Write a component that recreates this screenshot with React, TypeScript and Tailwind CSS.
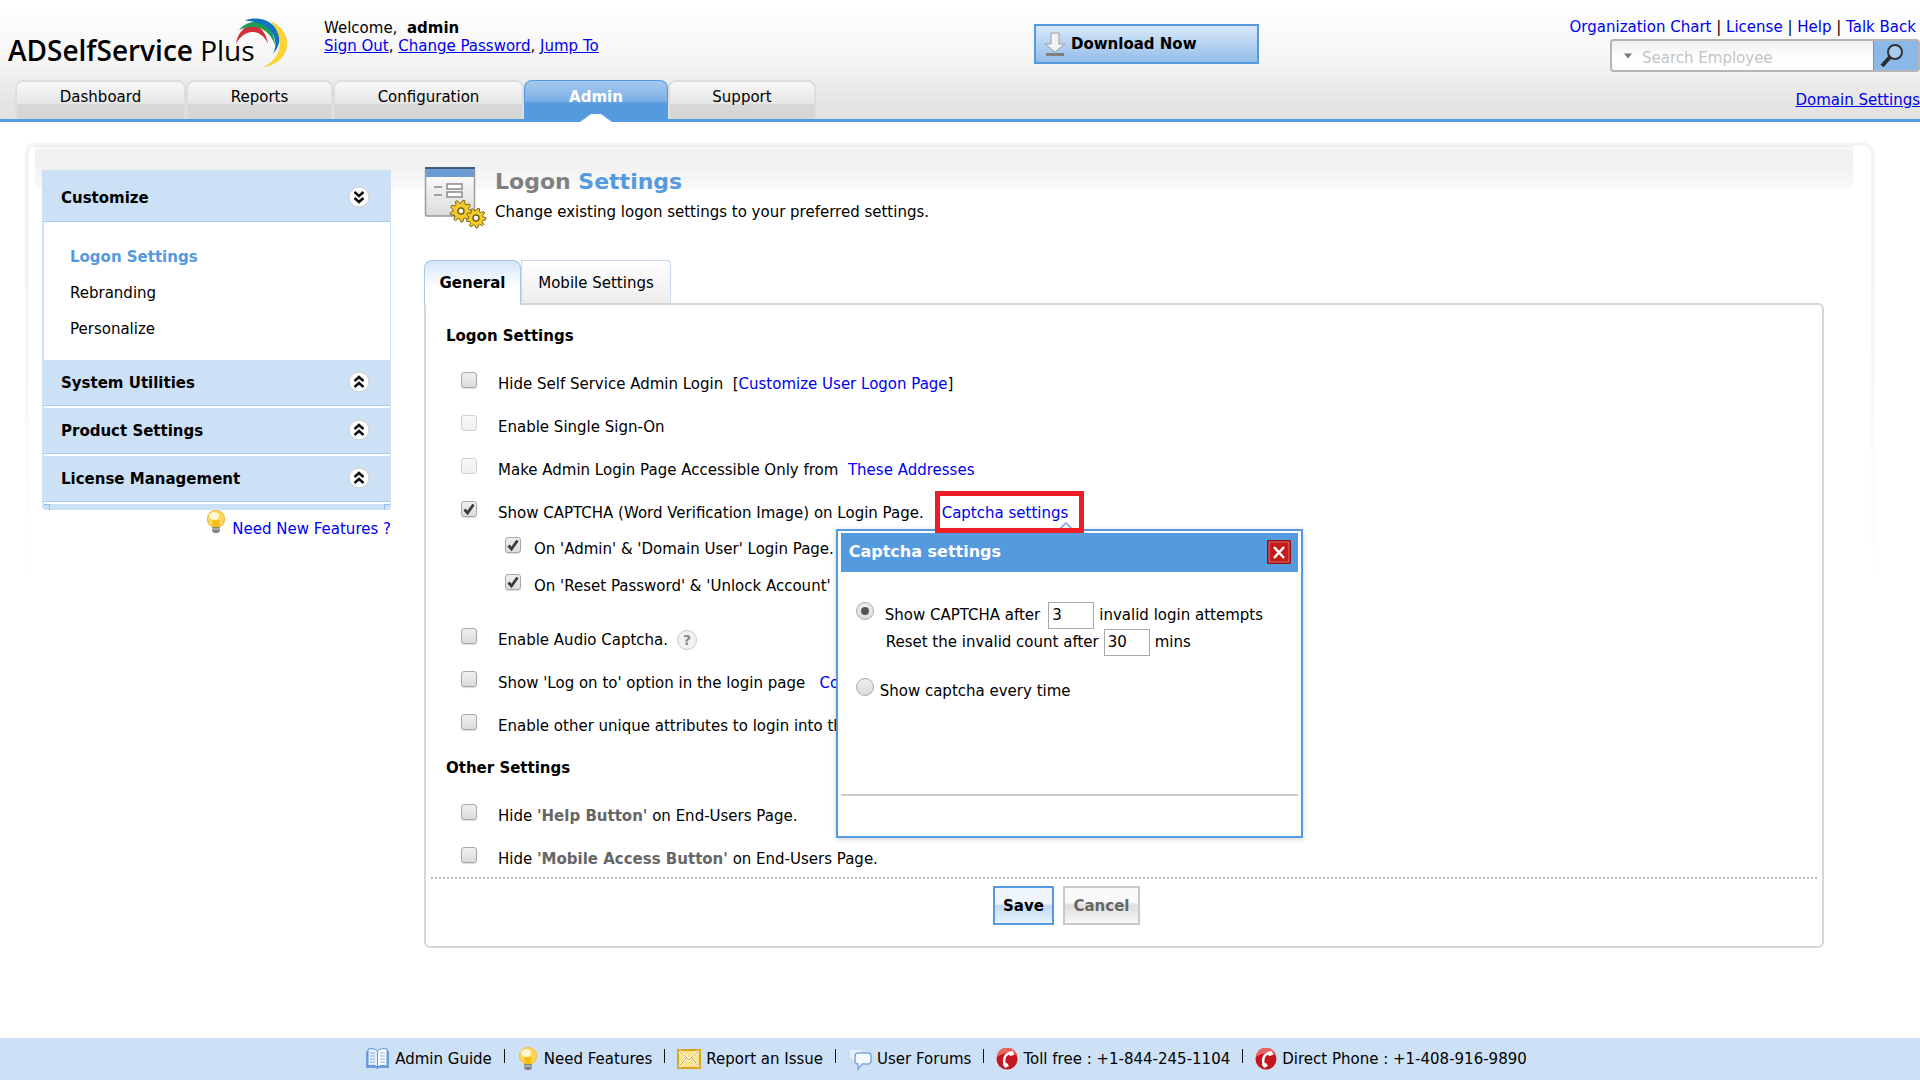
import { useState, type ReactNode } from "react";

const navTabs = [
  { label: "Dashboard", width: "w-[171px]" },
  { label: "Reports", width: "w-[147px]" },
  { label: "Configuration", width: "w-[191px]" },
  { label: "Admin", width: "w-[144px]" },
  { label: "Support", width: "w-[148px]" },
];

const menuSections = ["System Utilities", "Product Settings", "License Management"];

function Logo() {
  return (
    <div className="flex w-[324px] shrink-0 pt-[18px] pl-2">
      <a href="#" className="grid h-[50px] w-[280px]">
        <span className="col-start-1 row-start-1 self-end font-['Open_Sans',sans-serif] text-[28px] leading-[35px] whitespace-nowrap text-black">
          <b className="font-semibold">ADSelfService</b> Plus
        </span>
        <svg viewBox="0 0 54 50" className="col-start-1 row-start-1 h-[50px] w-[54px] justify-self-end">
          <path d="M2 26C5 4 30 -1 34 26C27 10 10 10 2 26Z" fill="#d3303a" />
          <path d="M5 12C18 -3 40 3 41 27C35 10 20 5 5 12Z" fill="#1f9d55" />
          <path d="M11 2.500C32 -6 58 14 39 36C47 18 34 4 11 2.500Z" fill="#0f75bc" />
          <path d="M36 3C60 12 60 44 29 49.500C50 39 50 18 36 3Z" fill="#fdd13a" />
        </svg>
      </a>
    </div>
  );
}

function BulbIcon() {
  return (
    <svg viewBox="0 0 22 24" className="h-6 w-[22px] shrink-0">
      <circle cx="11" cy="9" r="9.5" fill="#fbe7a8" />
      <circle cx="11" cy="9" r="8.5" fill="#ffd75e" stroke="#e9b64a" />
      <ellipse cx="9" cy="6" rx="5" ry="4" fill="#fff6d2" />
      <path d="M7 10h8l-1 7H8z" fill="#f6bd17" />
      <path d="M7 17h8v4l-2 2H9l-2-2z" fill="#858585" />
      <path d="M7 19h8" stroke="#cfcfcf" />
    </svg>
  );
}

function BookIcon() {
  return (
    <svg viewBox="0 0 25 22" className="h-[22px] w-[25px] shrink-0">
      <path d="M1 3v17h10l1.500 1.500L14 20h10V3z" fill="#6f9fda" />
      <path d="M3 1c4-1 8 0 9.500 2v16C10 17 6 17 3 18z" fill="#e4f1fd" stroke="#5d93d4" />
      <path d="M22 1c-4-1-8 0-9.500 2v16c2.500-2 6.500-2 9.500-1z" fill="#fff" stroke="#5d93d4" />
      <path d="M5 5h5M5 8h5M5 11h5M5 14h5M15 5h5M15 8h5M15 11h5M15 14h5" stroke="#7fb0e6" />
    </svg>
  );
}

function MailIcon() {
  return (
    <svg viewBox="0 0 24 22" className="h-[22px] w-6 shrink-0">
      <rect x="1" y="2" width="22" height="18" fill="#fbe28b" stroke="#d9a520" strokeWidth="2" />
      <path d="M2 3l10 9L22 3M2 19l7-9M22 19l-7-9" fill="none" stroke="#fff" strokeWidth="2.500" />
      <path d="M2 3l10 9L22 3M2 19l7-9M22 19l-7-9" fill="none" stroke="#d39a1c" />
    </svg>
  );
}

function ForumIcon() {
  return (
    <svg viewBox="0 0 24 24" className="h-6 w-6 shrink-0">
      <path d="M1 2h14v10H8l-4 4v-4H1z" fill="#e8f1fb" stroke="#c3d8ef" />
      <path d="M10 6h10q3 0 3 3v5q0 3-3 3h-6l-4 5v-5q-3 0-3-3V9q0-3 3-3z" fill="#f5faff" stroke="#7fa9dc" strokeWidth="1.500" />
    </svg>
  );
}

function PhoneIcon() {
  return (
    <svg viewBox="0 0 22 22" className="h-[22px] w-[22px] shrink-0">
      <circle cx="11" cy="11" r="10.500" fill="#c5161d" />
      <path d="M1 9a10 9 0 0 1 20-1C15 3 8 5 1 9z" fill="#e8625f" />
      <path d="M15 5C8 6 7 12 9 18" fill="none" stroke="#fff" strokeWidth="2.500" />
      <path d="M12 4l5-1 1 4-4 1zM7 16l4-1 2 3-4 2z" fill="#fff" />
    </svg>
  );
}

function DownloadIcon() {
  return (
    <svg viewBox="0 0 22 25" className="h-[25px] w-[22px]">
      <path d="M7 1h8v11h6L11 20 1 12h6z" fill="#f3f3f3" stroke="#9c9c9c" />
      <path d="M2 21h18v3H2z" fill="#808080" />
    </svg>
  );
}

function gearPath(cx: number, cy: number, r: number) {
  const points: string[] = [];
  for (let i = 0; i < 36; i++) {
    const radius = i % 4 < 2 ? r : r * 0.72;
    const angle = (i / 36) * Math.PI * 2;
    points.push(`${(cx + radius * Math.cos(angle)).toFixed(1)},${(cy + radius * Math.sin(angle)).toFixed(1)}`);
  }
  return points.join(" ");
}

function SettingsPageIcon() {
  return (
    <svg viewBox="0 0 63 63" className="h-[63px] w-[63px] shrink-0">
      <defs>
        <linearGradient id="sheet" x1="0" y1="0" x2="0" y2="1">
          <stop offset="0" stopColor="#ffffff" />
          <stop offset="1" stopColor="#dcdcdc" />
        </linearGradient>
      </defs>
      <rect x="1.500" y="2" width="49" height="48" rx="1.500" fill="url(#sheet)" stroke="#9b9b9b" strokeWidth="1.500" />
      <rect x="2" y="2" width="48" height="9" fill="#6d9bd3" />
      <path d="M1 2h50" stroke="#43597a" strokeWidth="2" />
      <path d="M10 21h8M10 29h8" stroke="#8b8b8b" strokeWidth="1.500" />
      <rect x="23" y="18" width="15" height="5" fill="#fff" stroke="#8b8b8b" strokeWidth="1.500" />
      <rect x="23" y="26" width="15" height="5" fill="#fff" stroke="#8b8b8b" strokeWidth="1.500" />
      <polygon points={gearPath(37, 45, 11)} fill="#f1cc2c" stroke="#7a6212" />
      <circle cx="37" cy="45" r="3" fill="#fff" stroke="#7a6212" strokeWidth="1.500" />
      <polygon points={gearPath(52, 52, 10)} fill="#f1cc2c" stroke="#7a6212" />
      <circle cx="52" cy="52" r="3" fill="#fff" stroke="#7a6212" strokeWidth="1.500" />
    </svg>
  );
}

function ChevronBadge({ down = false }: { down?: boolean }) {
  return (
    <svg viewBox="0 0 22 22" className="mb-[2px] h-[22px] w-[22px]">
      <circle cx="11" cy="11" r="10" fill="#fff" stroke="#cfcfcf" />
      <path
        d={down ? "M6.500 6l4.500 4 4.500-4M6.500 12l4.500 4 4.500-4" : "M6.500 10l4.500-4 4.500 4M6.500 16l4.500-4 4.500 4"}
        fill="none"
        stroke="#111"
        strokeWidth="2.500"
      />
    </svg>
  );
}

type CheckProps = { id: string; defaultChecked?: boolean; disabled?: boolean };

function Check({ id, defaultChecked = false, disabled = false }: CheckProps) {
  const [checked, setChecked] = useState(defaultChecked);
  return (
    <span className="mb-2 grid h-4 w-4 shrink-0">
      <input
        id={id}
        type="checkbox"
        checked={checked}
        disabled={disabled}
        onChange={(e) => setChecked(e.target.checked)}
        className="col-start-1 row-start-1 h-4 w-4 appearance-none rounded-[3px] border border-[#a9a9a9] bg-linear-to-b from-[#efefef] to-[#dcdcdc] shadow-[0_1px_1px_rgba(0,0,0,0.15)] disabled:border-[#d3d3d3] disabled:from-[#f8f8f8] disabled:to-[#f0f0f0] disabled:shadow-none"
      />
      {checked && (
        <svg viewBox="0 0 16 16" className="pointer-events-none col-start-1 row-start-1 h-4 w-4">
          <path d="M3.500 8.500l3 3.500L12.500 3.500" fill="none" stroke="#3b3b3b" strokeWidth="2.800" />
        </svg>
      )}
    </span>
  );
}

type SettingProps = CheckProps & { label: ReactNode; children?: ReactNode };

function Setting({ label, children, ...check }: SettingProps) {
  return (
    <div className="flex h-[43px] items-center pt-[2px] pl-[35px]">
      <Check {...check} />
      <label htmlFor={check.id} className="ml-[21px] whitespace-pre">{label}</label>
      {children}
    </div>
  );
}

function SubSetting({ label, ...check }: SettingProps) {
  return (
    <div className="flex h-[22px] items-center pl-[79px]">
      <Check {...check} />
      <label htmlFor={check.id} className="ml-[13px] whitespace-pre">{label}</label>
    </div>
  );
}

function CaptchaPopup({ onClose }: { onClose: () => void }) {
  const radio =
    "mb-2 grid h-[18px] w-[18px] shrink-0 appearance-none place-items-center rounded-full border border-[#a9a9a9] bg-linear-to-b from-[#efefef] to-[#dcdcdc] before:h-2 before:w-2 before:rounded-full checked:before:bg-[#555]";
  const box = "h-[27px] w-[46px] border border-[#a9a9a9] bg-white px-[3px]";
  return (
    <div
      role="dialog"
      aria-label="Captcha settings"
      className="absolute top-[27px] -left-[106px] z-10 h-[309px] w-[467px] border-2 border-[#5599de] bg-white p-[3px] pt-[2px] shadow-[0_1px_5px_rgba(0,0,0,0.2)]"
    >
      <div className="flex h-[39px] items-center justify-between bg-[#5599de] pr-[7px] pl-2">
        <h3 className="text-[16px] font-bold text-white">Captcha settings</h3>
        <button type="button" aria-label="Close" onClick={onClose} className="h-6 w-6">
          <svg viewBox="0 0 24 24" className="h-6 w-6">
            <rect width="24" height="24" rx="1" fill="#8f0f10" />
            <rect x="2" y="2" width="20" height="20" fill="#c31d1b" stroke="#e8716a" />
            <path d="M7 7l10 11M17 7L7 18" stroke="#fff" strokeWidth="2.500" />
          </svg>
        </button>
      </div>
      <div className="h-[222px] pt-[30px] pl-[15px]">
        <div className="flex h-[27px] items-center">
          <input id="after" name="captcha" type="radio" defaultChecked className={radio} />
          <label htmlFor="after" className="mr-2 ml-[11px]">Show CAPTCHA after</label>
          <input aria-label="Invalid login attempts" type="text" defaultValue="3" className={box} />
          <span className="ml-[5px]">invalid login attempts</span>
        </div>
        <div className="flex h-[27px] items-center pl-[30px]">
          <label htmlFor="mins" className="mr-[5px]">Reset the invalid count after</label>
          <input id="mins" type="text" defaultValue="30" className={box} />
          <span className="ml-[5px]">mins</span>
        </div>
        <div className="mt-[22px] flex h-[27px] items-center">
          <input id="every" name="captcha" type="radio" className={radio} />
          <label htmlFor="every" className="ml-[6px]">Show captcha every time</label>
        </div>
      </div>
      <hr className="border-t-2 border-[#ccc]" />
    </div>
  );
}

function Header() {
  return (
    <header className="flex h-[122px] justify-between border-b-[3px] border-[#5599de] bg-linear-to-b from-white from-5% via-[#f5f5f5] via-50% to-[#e4e3e1] to-90%">
      <div className="flex flex-col justify-between">
        <div className="flex">
          <Logo />
          <div className="pt-[19px] leading-[18px]">
            <p>Welcome, &nbsp;<b>admin</b></p>
            <p className="text-[#0000ee]">
              <a href="#" className="underline">Sign Out</a><span className="text-black">, </span>
              <a href="#" className="underline">Change Password</a><span className="text-black">, </span>
              <a href="#" className="underline">Jump To</a>
            </p>
          </div>
        </div>
        <nav className="flex pl-[15px]">
          {navTabs.map((tab) =>
            tab.label === "Admin" ? (
              <a key={tab.label} href="#" className={`${tab.width} flex h-[39px] flex-col items-center justify-between rounded-t-lg border border-b-0 border-[#5599de] bg-linear-to-b from-[#a5c9ee] via-[#7fb1e6] via-50% to-[#5599de] to-60% pt-[5px] font-bold text-white`}>
                Admin
                <svg viewBox="0 0 32 8" className="h-2 w-8 translate-y-[3px]"><path d="M0 8L11 0h10l11 8z" fill="#fff" /></svg>
              </a>
            ) : (
              <a key={tab.label} href="#" className={`${tab.width} flex h-[39px] justify-center rounded-t-lg border-2 border-b-0 border-[#dedede] bg-linear-to-b from-[#f8f8f8] via-[#e6e6e6] via-58% to-[#d6d6d6] to-62% pt-1`}>
                {tab.label}
              </a>
            )
          )}
        </nav>
      </div>
      <div className="flex">
        <button type="button" className="mt-6 mr-[308px] flex h-10 w-[225px] items-center gap-[5px] border-2 border-[#5599de] bg-linear-to-b from-[#d9e8f9] to-[#94bde9] pl-2 font-bold">
          <DownloadIcon />
          Download Now
        </button>
        <div className="flex w-[353px] flex-col items-end">
          <p className="mt-4 pr-1 text-[#0000ee]">
            <a href="#">Organization Chart</a> <span className="text-black">|</span> <a href="#">License</a>{" "}
            <span className="text-black">|</span> <a href="#">Help</a> <span className="text-black">|</span>{" "}
            <a href="#">Talk Back</a>
          </p>
          <form className="mt-px flex h-[33px] w-[310px] items-center rounded border-2 border-[#b5b5b5] bg-linear-to-b from-[#efefef] to-white to-60%">
            <svg viewBox="0 0 10 6" className="mr-[10px] ml-3 h-[6px] w-2"><path d="M0 0h10L5 6z" fill="#777" /></svg>
            <input aria-label="Search Employee" placeholder="Search Employee" className="w-full min-w-0 flex-1 bg-transparent pt-1 placeholder:text-[#c4c4c4]" />
            <button type="button" aria-label="Search" className="flex h-full w-[45px] items-center justify-center border-l border-[#5599de] bg-[#8ab8e8] pr-2">
              <svg viewBox="0 0 24 24" className="h-6 w-6">
                <circle cx="15" cy="8" r="7" fill="#a9cdf2" stroke="#333" strokeWidth="2" />
                <path d="M10 13l-8 9" stroke="#2b2b2b" strokeWidth="4" />
              </svg>
            </button>
          </form>
          <a href="#" className="mt-[17px] text-[#0000ee] underline">Domain Settings</a>
        </div>
      </div>
    </header>
  );
}

function Sidebar() {
  return (
    <aside className="w-[349px] shrink-0 pt-6">
      <div className="rounded-b border-r border-l-2 border-[#cce0f6] bg-white">
        <h2 className="flex h-[52px] items-center justify-between border-b border-[#a9caee] bg-[#cce0f6] pt-1 pr-[20px] pl-[17px] font-bold">
          Customize <ChevronBadge down />
        </h2>
        <ul className="flex h-[138px] flex-col gap-[14px] pt-6 pl-[26px]">
          <li><a href="#" className="font-bold text-[#5599de]">Logon Settings</a></li>
          <li><a href="#">Rebranding</a></li>
          <li><a href="#">Personalize</a></li>
        </ul>
        {menuSections.map((name) => (
          <h2 key={name} className="mb-[2px] flex h-[46px] items-center justify-between border-b border-[#a9caee] bg-[#cce0f6] pr-[20px] pl-[17px] font-bold">
            {name} <ChevronBadge />
          </h2>
        ))}
        <div className="flex h-[6px] justify-between bg-[#cce0f6]">
          <span className="w-[6px] border-t border-r border-[#8dbbec]" />
          <span className="w-[6px] border-t border-l border-[#8dbbec]" />
        </div>
      </div>
      <p className="flex justify-end gap-[5px]">
        <BulbIcon />
        <a href="#" className="pt-2 text-[#0000ee]">Need New Features ?</a>
      </p>
    </aside>
  );
}

function LogonSettings() {
  const [popupOpen, setPopupOpen] = useState(true);
  return (
    <section className="min-w-0 flex-1 pt-5">
      <div className="flex h-[94px] items-start gap-2">
        <SettingsPageIcon />
        <div>
          <h1 className="mt-[2px] text-[22px] leading-7 font-bold text-[#808080]">
            Logon <span className="text-[#5599de]">Settings</span>
          </h1>
          <p className="mt-[5px]">Change existing logon settings to your preferred settings.</p>
        </div>
      </div>
      <div className="flex">
        <button type="button" className="-mb-[2px] flex h-[45px] w-[97px] items-center justify-center rounded-t-lg border border-b-0 border-[#aac8ea] bg-linear-to-b from-[#d5e6f8] to-white to-60% font-bold">
          General
        </button>
        <button type="button" className="h-[43px] w-[150px] rounded-tr border border-b-0 border-[#c9d8e8] bg-linear-to-b from-white to-[#ededed] pt-[2px]">
          Mobile Settings
        </button>
      </div>
      <form className="rounded-md rounded-tl-none border-2 border-[#d5d5d5]">
        <h2 className="mt-[5px] flex h-[51px] items-center pl-5 font-bold">Logon Settings</h2>
        <Setting id="hide-admin" label={"Hide Self Service Admin Login  "}>
          <span>[<a href="#" className="text-[#0000ee]">Customize User Logon Page</a>]</span>
        </Setting>
        <Setting id="sso" disabled label="Enable Single Sign-On" />
        <Setting id="addresses" disabled label={"Make Admin Login Page Accessible Only from  "}>
          <a href="#" className="text-[#0000ee]">These Addresses</a>
        </Setting>
        <Setting id="captcha" defaultChecked label="Show CAPTCHA (Word Verification Image) on Login Page.">
          <span className="relative ml-[18px]">
            <a href="#" onClick={() => setPopupOpen(true)} className="text-[#0000ee]">Captcha settings</a>
            <svg viewBox="0 0 14 8" className="absolute top-[19px] right-[-5px] h-2 w-[14px]">
              <path d="M1 8l6-6 6 6" fill="#fff" stroke="#9db9d8" strokeWidth="2" />
            </svg>
            {popupOpen && <CaptchaPopup onClose={() => setPopupOpen(false)} />}
            <span className="pointer-events-none absolute -top-[11px] -left-[7px] z-20 h-[42px] w-[149px] border-5 border-[#ee1c24]" />
          </span>
        </Setting>
        <div className="flex flex-col gap-[15px] pt-[5px] pb-5">
          <SubSetting id="on-admin" defaultChecked label="On 'Admin' & 'Domain User' Login Page." />
          <SubSetting id="on-reset" defaultChecked label="On 'Reset Password' & 'Unlock Account' Page." />
        </div>
        <Setting id="audio" label="Enable Audio Captcha.">
          <button type="button" aria-label="Help" className="ml-[9px] h-5 w-5 rounded-full border border-[#c9c9c9] bg-[#f2f2f2] text-sm leading-4 font-bold text-[#8a8a8a]">?</button>
        </Setting>
        <Setting id="log-on-to" label={"Show 'Log on to' option in the login page   "}>
          <a href="#" className="text-[#0000ee]">Configure</a>
        </Setting>
        <Setting id="attributes" label="Enable other unique attributes to login into the product" />
        <h2 className="mb-1 flex h-[43px] items-center pl-5 font-bold">Other Settings</h2>
        <Setting id="hide-help" label={<>Hide <b className="text-[#666]">'Help Button'</b> on End-Users Page.</>} />
        <Setting id="hide-mobile" label={<>Hide <b className="text-[#666]">'Mobile Access Button'</b> on End-Users Page.</>} />
        <div className="mx-[5px] -mt-[2px] flex justify-center gap-[9px] border-t-2 border-dotted border-[#bbb] pt-[7px] pr-[115px] pb-[21px]">
          <button type="button" className="h-[39px] w-[61px] border-2 border-[#5599de] bg-linear-to-b from-[#eef5fd] from-45% via-[#c3dbf5] via-50% to-[#e9f2fc] font-bold">
            Save
          </button>
          <button type="button" className="h-[39px] w-[77px] border-2 border-[#c9c9c9] bg-linear-to-b from-[#fafafa] from-40% via-[#dedede] via-50% to-[#f8f8f8] font-bold text-[#666]">
            Cancel
          </button>
        </div>
      </form>
    </section>
  );
}

function Footer() {
  const items = [
    { icon: <BookIcon />, text: "Admin Guide" },
    { icon: <BulbIcon />, text: "Need Features" },
    { icon: <MailIcon />, text: "Report an Issue" },
    { icon: <ForumIcon />, text: "User Forums" },
    { icon: <PhoneIcon />, text: "Toll free : +1-844-245-1104" },
    { icon: <PhoneIcon />, text: "Direct Phone : +1-408-916-9890" },
  ];
  return (
    <footer className="mt-auto flex h-[42px] items-center justify-center bg-[#cce0f6] pr-7">
      {items.map((item, i) => (
        <div key={item.text} className="flex items-center">
          {i > 0 && <span className="mx-3 mb-[6px] h-[14px] w-px bg-[#111]" />}
          <a href="#" className="flex items-center gap-[5px]">
            {item.icon}
            {item.text}
          </a>
        </div>
      ))}
    </footer>
  );
}

export default function App() {
  return (
    <div className="flex min-h-screen flex-col bg-white font-['DejaVu_Sans',Verdana,sans-serif] text-[15px] leading-[22px] text-black">
      <Header />
      <main className="mt-5 mr-[45px] ml-[25px] flex items-start">
        <div className="h-[450px] w-[10px] shrink-0 rounded-tl-xl border-t-4 border-l-4 border-[#f5f5f5] mask-b-from-30%" />
        <div className="flex min-w-0 flex-1 gap-[33px] bg-[linear-gradient(#fcfcfc,#ececec_5px,#fdfdfd_6px,#f1f1f1_8px,#f1f1f1_24px,#fafafa)] bg-[length:100%_47px] bg-no-repeat pt-1 pr-[29px] pb-8 pl-[7px]">
          <Sidebar />
          <LogonSettings />
        </div>
        <div className="h-[450px] w-[22px] shrink-0 rounded-tr-xl border-t-4 border-r-4 border-[#f5f5f5] mask-b-from-30%" />
      </main>
      <Footer />
    </div>
  );
}
